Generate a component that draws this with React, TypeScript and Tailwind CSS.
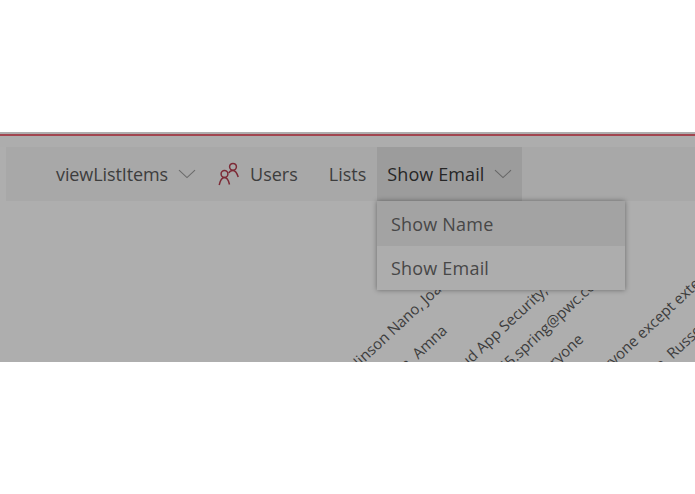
const font = "font-['Open_Sans','Noto_Sans',sans-serif]";

function Chevron({ className }: { className: string }) {
  return (
    <svg width="18" height="10" viewBox="0 0 18 10" fill="none" className={className}>
      <path d="M1 1.2 L9 8.6 L17 1.2" stroke="currentColor" strokeWidth="1.1" />
    </svg>
  );
}

function UsersIcon() {
  return (
    <svg width="22" height="24" viewBox="0 0 22 24" fill="none" stroke="#7d2a36" strokeWidth="1.5" className="shrink-0">
      <circle cx="6.5" cy="12" r="3.4" />
      <path d="M1.2 23 C2 19.5 3.5 15.6 6.5 15.6 C9 15.6 10.5 18.5 11.5 22.5" />
      <circle cx="15" cy="4.8" r="3.4" />
      <path d="M10.8 11 C11.5 9.5 13 8.4 15 8.4 C17.6 8.4 19 11 20.2 15" />
    </svg>
  );
}

const rotated: { text: string; left: number; top: number }[] = [
  { text: "Hinson Nano, Joan", left: 358, top: 222 },
  { text: "Khan, Amna", left: 390, top: 239 },
  { text: "Cloud App Security, Inc", left: 453, top: 234 },
  { text: "o365.spring@pwc.com", left: 495, top: 235 },
  { text: "Everyone", left: 541, top: 234 },
  { text: "Everyone except external users", left: 596, top: 236 },
  { text: "Doe, Russell", left: 650, top: 234 },
];

export default function App() {
  return (
    <div className={`w-[695px] h-[494px] bg-white overflow-hidden ${font}`}>
      <div className="h-[132px]" />
      <div className="relative h-[230px] bg-[#aeaeae] overflow-hidden">
        <div className="h-[2px]" />
        <div className="h-[2px] bg-[#a2454f]" />
        <div className="h-[11px] bg-[#adadad]" />
        <div className="ml-[6px] h-[54px] bg-[#a8a8a8] flex items-stretch text-[18px] text-[#3d3d3d]">
          <div className="flex items-center pl-[50px] tracking-[-0.1px]">
            <span>viewListItems</span>
            <Chevron className="ml-[10px] text-[#6b6b6b]" />
          </div>
          <div className="flex items-center ml-[22px]">
            <UsersIcon />
            <span className="ml-[10px]">Users</span>
          </div>
          <div className="flex items-center ml-[31px]">Lists</div>
          <div className="flex items-center ml-[11px] w-[145px] pl-[10px] bg-[#9c9c9c] text-[#262626]">
            <span className="tracking-[0.1px]">Show Email</span>
            <Chevron className="ml-[10px] text-[#666666]" />
          </div>
        </div>

        {rotated.map((r) => (
          <span
            key={r.text}
            className="absolute text-[15px] text-[#3d3d3d] whitespace-nowrap origin-bottom-left -rotate-[43deg]"
            style={{ left: r.left, top: r.top }}
          >
            {r.text}
          </span>
        ))}

        <div className="absolute left-[377px] top-[69px] w-[248px] h-[89px] bg-[#adadad] shadow-[0_0_5px_rgba(0,0,0,0.4)] text-[18px] text-[#474747] tracking-[0.2px]">
          <div className="h-[45px] pl-[14px] pt-[2px] flex items-center bg-[#a3a3a3]">Show Name</div>
          <div className="h-[44px] pl-[14px] flex items-center">Show Email</div>
        </div>
      </div>
    </div>
  );
}
